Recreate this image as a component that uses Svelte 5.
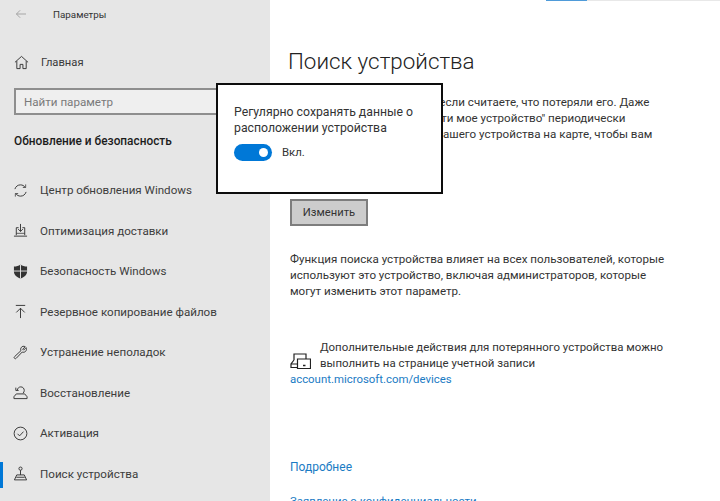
<script>
  const navItems = [
    { label: 'Центр обновления Windows', icon: 'sync' },
    { label: 'Оптимизация доставки', icon: 'delivery' },
    { label: 'Безопасность Windows', icon: 'shield' },
    { label: 'Резервное копирование файлов', icon: 'backup' },
    { label: 'Устранение неполадок', icon: 'wrench' },
    { label: 'Восстановление', icon: 'recovery' },
    { label: 'Активация', icon: 'check' },
    { label: 'Поиск устройства', icon: 'find', active: true },
  ];

  let locationOn = $state(true);
</script>

{#snippet navIcon(name)}
  <svg class="icon" viewBox="0 0 16 16" fill="none" stroke="currentColor" stroke-width="1">
    {#if name === 'home'}
      <path d="M1 7.800 8 1.500l7 6.300M3 6.500v8h3.500v-4.500h3v4.500H13v-8" />
    {:else if name === 'sync'}
      <path d="M2 6.500C3 3.500 5.200 2 8 2c2 0 3.700.9 5 2.600M14 9.500c-1 3-3.200 4.500-6 4.500-2 0-3.700-.9-5-2.600" />
      <path d="M13.500 1.500v3.300h-3M2.500 14.500v-3.300h3" stroke-width="0.8" />
    {:else if name === 'delivery'}
      <path d="M3.500 5v8M12.500 5v8M3.500 5H6M10 5h2.500M8 1v8M5.500 6.500 8 9l2.500-2.500M1 14h14" />
      <path d="M3.500 11h9" stroke-width="0.8" />
    {:else if name === 'shield'}
      <path fill="currentColor" stroke="none" d="M8 .5c2 1.500 4.400 2.200 7 2.200v5.300c0 3.500-2.700 6-7 7.500-4.300-1.500-7-4-7-7.500V2.700C3.600 2.700 6 2 8 .5z" />
      <path stroke="#e6e6e6" stroke-width="1" d="M8 .5v15M1 7.500h14" />
    {:else if name === 'backup'}
      <path d="M3 1.500h10M8 15V4.500M3.500 9 8 4.500 12.500 9" />
    {:else if name === 'wrench'}
      <path d="M14 2.800 11.300 5.500l-1-1L13 1.800C11.500 1 9.800 1.300 8.900 2.500 8 3.600 8 5 8.500 6L1.800 12.300c-.8.800-.8 1.300-.2 1.900.6.600 1.200.6 1.900-.1L9.800 7.500c1.200.5 2.600.3 3.600-.7 1-1 1.300-2.700.6-4z" />
    {:else if name === 'recovery'}
      <path d="M4.500 5.500C5 3.300 6.400 2 8.300 2c2.200 0 3.700 1.700 3.700 3.800 0 1.200-.5 2.200-1.300 3M3 2.800v3h3M3.500 9.500l-2.500 3v2h14v-2l-2.500-3z" />
    {:else if name === 'check'}
      <circle cx="8" cy="8" r="6.800" />
      <path d="M4.800 8.300 7 10.500l4.200-4.500" />
    {:else if name === 'find'}
      <circle cx="8" cy="2.800" r="1.700" />
      <path d="M8 4.500v5M1.500 14.800 4 9.500h8l2.500 5.300zM3.500 12h9" />
    {/if}
  </svg>
{/snippet}

<div class="window">
  <aside class="sidebar">
    <header class="titlebar">
      <svg class="back" viewBox="0 0 14 12" fill="none" stroke="currentColor" stroke-width="1">
        <path d="M13 6H1.500M6 1.500 1.500 6 6 10.500" />
      </svg>
      <span>Параметры</span>
    </header>

    <div class="home">
      {@render navIcon('home')}
      <span>Главная</span>
    </div>

    <div class="search">Найти параметр</div>

    <h2 class="section">Обновление и безопасность</h2>

    <nav>
      {#each navItems as item}
        <div class="nav-item" class:active={item.active}>
          {@render navIcon(item.icon)}
          <span>{item.label}</span>
        </div>
      {/each}
    </nav>
  </aside>

  <main class="content">
    <div class="top-line"><span></span></div>
    <h1>Поиск устройства</h1>
    <p class="intro">
      Найдите свое устройство, если считаете, что потеряли его. Даже<br />
      не потеряли, функция "Найти мое устройство" периодически<br />
      сохраняет расположение вашего устройства на карте, чтобы вам
    </p>
    <button type="button" class="change">Изменить</button>
    <p class="note">
      Функция поиска устройства влияет на всех пользователей, которые<br />
      используют это устройство, включая администраторов, которые<br />
      могут изменить этот параметр.
    </p>
    <div class="more">
      <svg class="devices" viewBox="0 0 21 16" fill="none" stroke="currentColor" stroke-width="1.200">
        <path d="M4 7V1h12v5M7.500 6h13v9.500h-13zM4 7 1 11v3.500h6.500M1 11h6.500" />
        <path d="M13 12.500h2.500" stroke-width="1.500" />
      </svg>
      <p>
        Дополнительные действия для потерянного устройства можно<br />
        выполнить на странице учетной записи
      </p>
    </div>
    <a class="link devices-link" href="#devices">account.microsoft.com/devices</a>
    <a class="link details" href="#details">Подробнее</a>
    <a class="link privacy" href="#privacy">Заявление о конфиденциальности</a>
  </main>

  <div class="popup">
    <p>Регулярно сохранять данные о<br />расположении устройства</p>
    <div class="toggle-row">
      <button
        type="button"
        class="toggle"
        class:on={locationOn}
        aria-label="Регулярно сохранять данные"
        onclick={() => (locationOn = !locationOn)}
      ><span></span></button>
      <span>{locationOn ? 'Вкл.' : 'Откл.'}</span>
    </div>
  </div>
</div>

<style>
  :global(body) {
    margin: 0;
    background: #fff;
  }

  .window {
    position: relative;
    display: flex;
    width: 720px;
    height: 501px;
    overflow: hidden;
    font-family: Roboto, 'Open Sans', sans-serif;
    font-size: 11.6px;
    color: #2b2b2b;
  }

  .sidebar {
    flex: 0 0 270px;
    box-sizing: border-box;
    background: #e6e6e6;
  }

  .titlebar {
    display: flex;
    align-items: center;
    gap: 26px;
    height: 28px;
    padding-left: 15px;
    font-size: 9.8px;
    color: #333;
  }

  .back {
    width: 12px;
    height: 10px;
    color: #9a9a9a;
  }

  .icon {
    flex: none;
    width: 15px;
    height: 15px;
    color: #333;
  }

  .home {
    display: flex;
    align-items: center;
    gap: 12px;
    height: 40px;
    margin-top: 14px;
    padding-left: 14px;
    font-size: 11.2px;
    color: #3a3a3a;
  }

  .search {
    box-sizing: border-box;
    width: 240px;
    height: 27px;
    margin: 6px 0 0 14px;
    padding-left: 8px;
    line-height: 24px;
    background: #efefef;
    border: 2px solid #8e8e8e;
    color: #7a7a7a;
  }

  .section {
    margin: 16px 0 0 14px;
    font-size: 11.85px;
    line-height: 20px;
    font-weight: 500;
    color: #1c1c1c;
  }

  nav {
    margin-top: 19px;
  }

  .nav-item {
    position: relative;
    display: flex;
    align-items: center;
    gap: 12px;
    height: 40.5px;
    padding-left: 13px;
    color: #3d3d3d;
  }

  .nav-item.active::before {
    content: '';
    position: absolute;
    left: 0;
    top: 8px;
    width: 3px;
    height: 26px;
    background: #0078d7;
  }

  .content {
    position: relative;
    flex: 1;
    padding-left: 20px;
  }

  .top-line {
    display: flex;
    width: 174px;
    height: 1px;
    margin-left: 256px;
    background: #e8e8e8;
  }

  .top-line span {
    width: 41px;
    background: #4f9bd9;
  }

  h1 {
    margin: 42.5px 0 0 -2px;
    font-size: 22.4px;
    line-height: 34px;
    font-weight: 300;
    color: #222;
  }

  p {
    margin: 0;
  }

  .intro,
  .note,
  .more p {
    line-height: 15.8px;
    color: #333;
    white-space: nowrap;
  }

  .intro {
    margin-top: 17.5px;
    padding-left: 5px;
  }

  .change {
    display: block;
    box-sizing: border-box;
    width: 78px;
    height: 27px;
    margin-top: 56.6px;
    padding: 1px 0 0;
    background: #cccccc;
    border: 2px solid #7d7d7d;
    font: inherit;
    font-size: 11.2px;
    color: #333;
  }

  .note {
    margin-top: 26px;
  }

  .more {
    display: flex;
    align-items: center;
    gap: 9px;
    margin-top: 40.5px;
    font-size: 11.45px;
  }

  .devices {
    flex: none;
    width: 21px;
    height: 16px;
    margin-top: 10px;
    color: #222;
  }

  .link {
    display: block;
    font-size: 11.4px;
    line-height: 16px;
    color: #1a7bc4;
    text-decoration: none;
    white-space: nowrap;
  }

  .devices-link {
    margin-top: -0.5px;
  }

  .details {
    margin-top: 72px;
    font-size: 12px;
  }

  .privacy {
    margin-top: 18px;
  }

  .popup {
    position: absolute;
    left: 216px;
    top: 83px;
    box-sizing: border-box;
    width: 227px;
    height: 111px;
    padding: 18.5px 16px 0;
    background: #fff;
    border: 2px solid #0d0d0d;
    color: #333;
  }

  .popup p {
    font-size: 12.25px;
    line-height: 16.5px;
  }

  .toggle-row {
    display: flex;
    align-items: center;
    gap: 10px;
    margin-top: 7px;
    font-size: 11.4px;
  }

  .toggle {
    display: flex;
    align-items: center;
    justify-content: flex-end;
    width: 38px;
    height: 17px;
    padding: 0 4px;
    border: 0;
    border-radius: 9px;
    background: #0078d7;
  }

  .toggle span {
    width: 9px;
    height: 9px;
    border-radius: 50%;
    background: #fff;
  }
</style>
